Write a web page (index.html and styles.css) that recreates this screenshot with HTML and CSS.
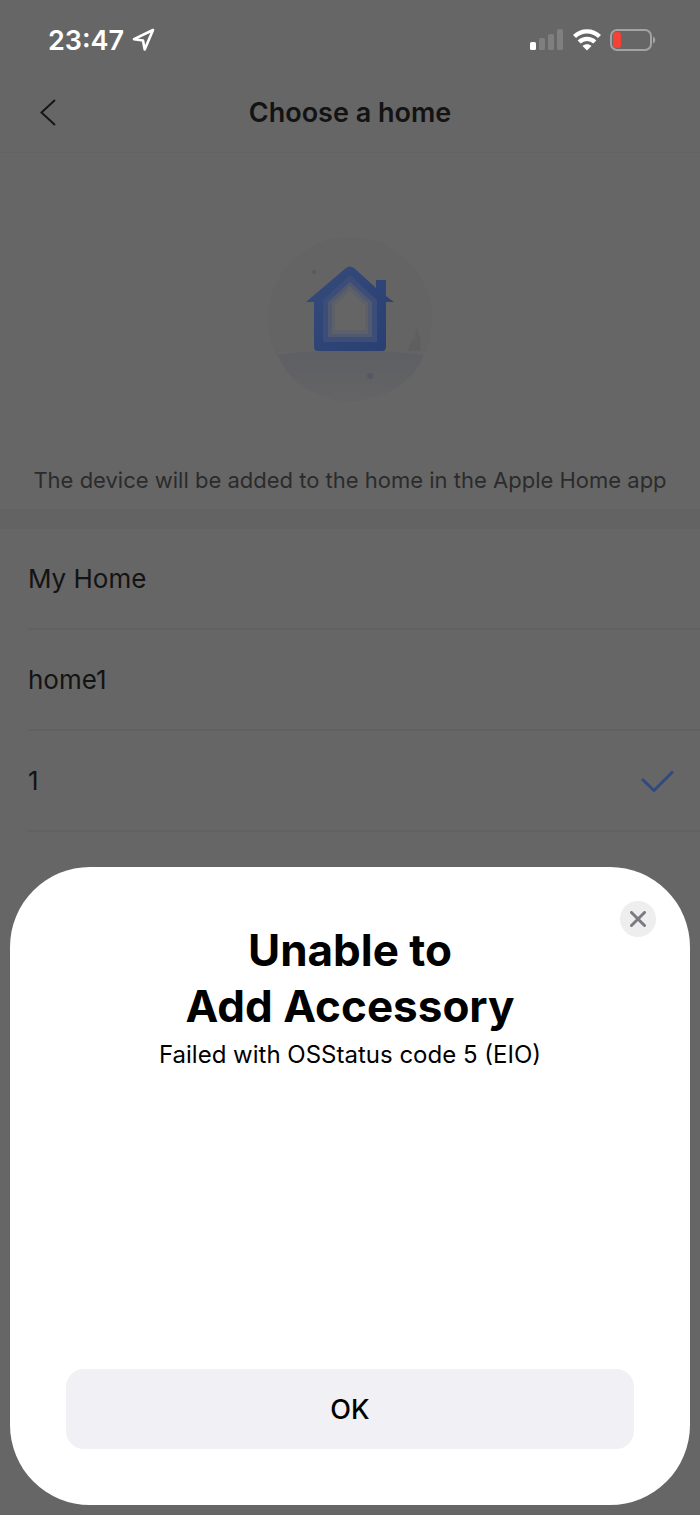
FILE: index.html
```
<!DOCTYPE html>
<html lang="en">
<head>
    <meta charset="UTF-8">
    <meta name="viewport" content="width=device-width, initial-scale=1.0">
    <title>Choose a home</title>
    <link rel="stylesheet" href="styles.css">
</head>
<body>
    <div class="status-bar">
        <div class="status-left">
            <span class="time">23:47</span>
            <svg class="location-icon" width="24" height="24" viewBox="0 0 24 24" fill="none" stroke="#fff" stroke-width="2.6" stroke-linejoin="round">
                <path d="M21 2 L2 11.200 L11 12.500 L12.700 21.500 Z"/>
            </svg>
        </div>
        <div class="status-right">
            <svg width="34" height="22" viewBox="0 0 34 22">
                <rect x="0" y="13" width="6" height="8" rx="1.500" fill="#fff"/>
                <rect x="9" y="9" width="6" height="12" rx="1.500" fill="#7f7f7f"/>
                <rect x="18" y="5" width="6" height="16" rx="1.500" fill="#7f7f7f"/>
                <rect x="27" y="0" width="6" height="21" rx="1.500" fill="#7f7f7f"/>
            </svg>
            <svg width="28" height="22" viewBox="0 0 28 22" fill="none" stroke="#fff" stroke-width="4.400">
                <path d="M1.500 7.500 C8.500 0.600 19.500 0.600 26.500 7.500"/>
                <path d="M6.200 13 C10.600 8.800 17.400 8.800 21.800 13"/>
                <path d="M14 21.500 L9.500 17 C12 14.700 16 14.700 18.500 17 Z" fill="#fff" stroke="none"/>
            </svg>
            <svg width="46" height="22" viewBox="0 0 46 22">
                <rect x="1" y="1" width="40" height="20" rx="6" fill="none" stroke="#a3a3a3" stroke-width="2"/>
                <rect x="3" y="3" width="8" height="16" rx="3" fill="#f44336"/>
                <path d="M43 7.500 C46 9 46 13 43 14.500 Z" fill="#a3a3a3"/>
            </svg>
        </div>
    </div>

    <header class="nav-bar">
        <button type="button" class="back-btn" aria-label="Back">
            <svg width="18" height="28" viewBox="0 0 18 28" fill="none" stroke="#161616" stroke-width="2">
                <path d="M17 2 L3.500 14.500 L17 27"/>
            </svg>
        </button>
        <h1>Choose a home</h1>
    </header>

    <main>
        <section class="intro">
            <svg class="home-picture" width="168" height="168" viewBox="0 0 168 168">
                <defs>
                    <linearGradient id="ground" x1="0" y1="0" x2="0" y2="1">
                        <stop offset="0" stop-color="#5e5f64"/>
                        <stop offset="1" stop-color="#646465"/>
                    </linearGradient>
                    <linearGradient id="wall" x1="0" y1="0" x2="1" y2="1">
                        <stop offset="0" stop-color="#354b7b"/>
                        <stop offset="1" stop-color="#293f72"/>
                    </linearGradient>
                </defs>
                <circle cx="84" cy="84" r="82" fill="#646464"/>
                <path d="M12 120 C48 114 112 114 158 120 C146 149 117 166 84 166 C51 166 23 147 12 120 Z" fill="url(#ground)"/>
                <path d="M142 116 L145 106 L148 105 L151 93 L155 105 L154 116 Z" fill="#5f5f61"/>
                <circle cx="48" cy="37" r="2" fill="#595a61"/>
                <circle cx="104" cy="141" r="3" fill="#555863"/>
                <path d="M40 67 L80 33 Q84 30 88 33 L110 53 V45 H120 V61 L128 67 H120 V112 Q120 116 116 116 H52 Q48 116 48 112 V67 Z" fill="url(#wall)"/>
                <path d="M57 107 V65 L84 40 L111 65 V107 Z" fill="#3c4e78"/>
                <path d="M62 102 V67 L84 47 L106 67 V102 Z" fill="#505970"/>
                <path d="M66 99 V68 L84 51 L102 68 V99 Z" fill="#5d6069"/>
                <path d="M69 95 V70 L84 56 L99 70 V95 Z" fill="#656565"/>
            </svg>
            <p>The device will be added to the home in the Apple Home app</p>
        </section>

        <ul class="home-list">
            <li><button type="button" class="home-row">My Home</button></li>
            <li><button type="button" class="home-row">home1</button></li>
            <li>
                <button type="button" class="home-row" aria-pressed="true">
                    1
                    <svg width="34" height="24" viewBox="0 0 34 24" fill="none" stroke="#304981" stroke-width="3">
                        <path d="M2 10 L14 21.500 L33 2.500"/>
                    </svg>
                </button>
            </li>
        </ul>
    </main>

    <div class="sheet" role="dialog" aria-labelledby="sheetTitle">
        <button type="button" class="close-btn" aria-label="Close">
            <svg width="16" height="16" viewBox="0 0 16 16" fill="none" stroke="#7c7c80" stroke-width="3" stroke-linecap="round">
                <path d="M1.500 1.500 L14.500 14.500 M14.500 1.500 L1.500 14.500"/>
            </svg>
        </button>
        <h2 id="sheetTitle">Unable to<br>Add Accessory</h2>
        <p>Failed with OSStatus code 5 (EIO)</p>
        <button type="button" class="ok-btn">OK</button>
    </div>
</body>
</html>
```

FILE: styles.css
```
* {
    box-sizing: border-box;
}

body {
    margin: 0;
    min-height: 100vh;
    background: #666;
    color: #131313;
    font-family: Inter, "Liberation Sans", sans-serif;
}

h1, h2, p, ul {
    margin: 0;
    padding: 0;
}

button {
    border: none;
    padding: 0;
    background: none;
    color: inherit;
    font-family: inherit;
    cursor: pointer;
}

svg {
    display: block;
}

.status-bar {
    display: flex;
    justify-content: space-between;
    align-items: center;
    height: 80px;
    padding: 0 44px 0 48px;
    color: #fff;
}

.status-left {
    display: flex;
    align-items: center;
    gap: 8px;
}

.time {
    font-size: 27px;
    font-weight: 600;
}

.status-right {
    display: flex;
    align-items: center;
    gap: 9px;
}

.nav-bar {
    display: grid;
    grid-template-columns: 60px 1fr 60px;
    align-items: center;
    height: 73px;
    padding-bottom: 8px;
    border-bottom: 1px solid #636363;
}

.back-btn {
    display: flex;
    justify-content: flex-end;
    padding-right: 4px;
}

.nav-bar h1 {
    text-align: center;
    font-size: 27px;
    font-weight: 600;
}

.intro {
    display: flex;
    flex-direction: column;
    align-items: center;
    gap: 60px;
    padding: 82px 24px 12px;
    border-bottom: 20px solid #636363;
}

.intro p {
    color: #2b2b2b;
    font-size: 22px;
    line-height: 34px;
    text-align: center;
}

.home-list {
    list-style: none;
    padding-left: 28px;
}

.home-list li {
    border-bottom: 2px solid #616161;
}

.home-row {
    display: flex;
    justify-content: space-between;
    align-items: center;
    width: 100%;
    height: 99px;
    padding-right: 26px;
    font-size: 26px;
    text-align: left;
}

.sheet {
    position: fixed;
    right: 10px;
    bottom: 10px;
    left: 10px;
    padding: 55px 56px 56px;
    border-radius: 80px;
    background: #fff;
    color: #000;
    text-align: center;
}

.sheet h2 {
    font-size: 44px;
    line-height: 56px;
    font-weight: 700;
}

.sheet p {
    margin-bottom: 293px;
    font-size: 24px;
    line-height: 42px;
}

.close-btn {
    position: absolute;
    top: 34px;
    right: 34px;
    display: flex;
    align-items: center;
    justify-content: center;
    width: 36px;
    height: 36px;
    border-radius: 50%;
    background: #eeeeef;
}

.ok-btn {
    display: block;
    width: 100%;
    height: 80px;
    border-radius: 18px;
    background: #f1f1f5;
    font-size: 27px;
    font-weight: 500;
}
```
